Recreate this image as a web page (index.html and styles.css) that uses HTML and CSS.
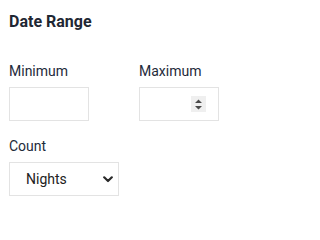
FILE: index.html
```html
<!DOCTYPE html>
<html>
<head>
<meta charset="utf-8">
<link rel="stylesheet" href="styles.css">
</head>
<body>
<div class="panel">
  <h2 class="title">Date Range</h2>
  <div class="row">
    <div class="field">
      <label class="label">Minimum</label>
      <div class="box"><input class="input" type="text"></div>
    </div>
    <div class="field">
      <label class="label">Maximum</label>
      <div class="box">
        <input class="input" type="text">
        <span class="spin">
          <svg width="7" height="11" viewBox="0 0 7 11"><path d="M3.5 0.5 L7 4 L0 4 Z M0 7 L7 7 L3.5 10.5 Z" fill="#4a4a4a"/></svg>
        </span>
      </div>
    </div>
  </div>
  <div class="field count">
    <label class="label">Count</label>
    <div class="box select">
      <span class="select-text">Nights</span>
      <svg class="chev" width="10" height="7" viewBox="0 0 10 7"><path d="M1.2 1.3 L5 5 L8.8 1.3" fill="none" stroke="#2a2a2a" stroke-width="2.2" stroke-linecap="round" stroke-linejoin="round"/></svg>
    </div>
  </div>
</div>
</body>
</html>
```
FILE: styles.css
```css
html, body {
  margin: 0;
  padding: 0;
  background: #ffffff;
}
body {
  font-family: Roboto, "Liberation Sans", sans-serif;
  color: #222;
}
.panel {
  padding: 12px 9px 0 9px;
  display: flex;
  flex-direction: column;
}
.title {
  margin: 0;
  font-size: 16px;
  line-height: 20px;
  font-weight: 700;
  color: #1f2733;
}
.row {
  margin-top: 29px;
  display: grid;
  grid-template-columns: 80px 80px;
  column-gap: 50px;
}
.field {
  display: flex;
  flex-direction: column;
}
.label {
  font-size: 14px;
  line-height: 20px;
  color: #1e2a3a;
  margin-bottom: 6px;
}
.box {
  box-sizing: border-box;
  height: 34px;
  border: 1px solid #e3e3e3;
  display: flex;
  align-items: center;
  background: #fff;
}
.input {
  flex: 1;
  min-width: 0;
  border: none;
  outline: none;
  height: 100%;
  padding: 0 8px;
  background: transparent;
  font: inherit;
}
.spin {
  width: 15px;
  height: 16px;
  margin-right: 12px;
  background: #efefef;
  display: flex;
  align-items: center;
  justify-content: center;
  flex: none;
}
.count {
  margin-top: 15px;
}
.select {
  width: 110px;
  padding: 0 5px 0 16px;
  justify-content: space-between;
}
.select-text {
  font-size: 14px;
  color: #222;
}
.chev {
  display: block;
}
```
